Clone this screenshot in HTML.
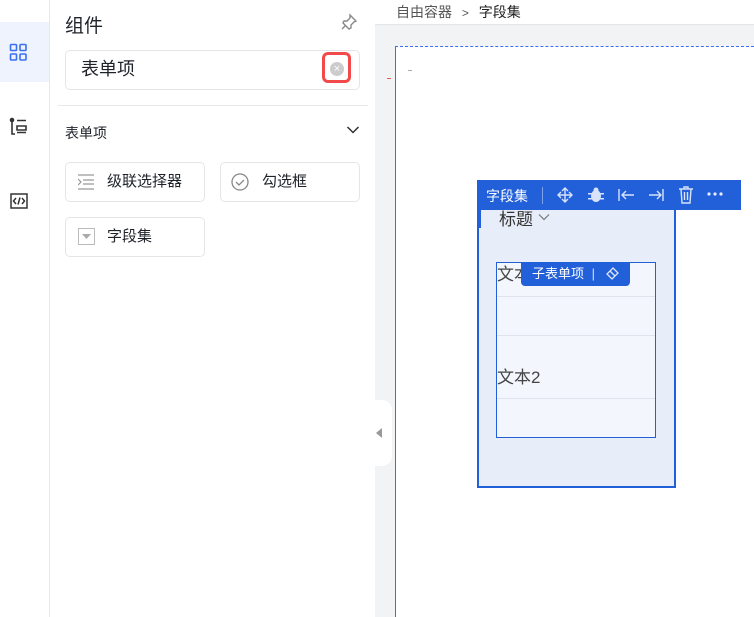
<!DOCTYPE html><html><head><meta charset="utf-8"><style>
*{margin:0;padding:0;box-sizing:border-box}
body{width:754px;height:617px;overflow:hidden;background:#f2f3f5;font-family:"Liberation Sans","Noto Sans CJK SC",sans-serif;position:relative;color:#1f2329}
.a{position:absolute}
.btn{position:absolute;height:40px;border:1px solid #e3e5e8;border-radius:5px;background:#fff;font-size:15px;line-height:38px}
</style></head><body>
<div class="a" style="left:0;top:0;width:50px;height:617px;background:#fff;border-right:1px solid #e8e8ea"></div>
<div class="a" style="left:0;top:22px;width:49px;height:60px;background:#eef3fe"></div>
<svg class="a" style="left:9px;top:43px" width="20" height="20" viewBox="0 0 20 20" fill="none" stroke="#3a6ff0" stroke-width="1.6"><rect x="1.5" y="1.5" width="6" height="6" rx="1"/><rect x="11" y="1.5" width="6" height="6" rx="1"/><rect x="1.5" y="11" width="6" height="6" rx="1"/><rect x="11" y="11" width="6" height="6" rx="1"/></svg>
<svg class="a" style="left:9px;top:117px" width="20" height="20" viewBox="0 0 20 20" fill="none" stroke="#333" stroke-width="1.6"><circle cx="3" cy="3" r="1.5" fill="#333"/><path d="M3 4v13h3M8 3.5h9M8 9h9v4H8zM8 15.5h9"/></svg>
<svg class="a" style="left:10px;top:193px" width="18" height="16" viewBox="0 0 18 16" fill="none" stroke="#333" stroke-width="1.5"><rect x="1" y="1" width="16" height="14"/><path d="M6 5l-2.5 3L6 11M12 5l2.5 3L12 11M10 4.5l-2 7"/></svg>
<div class="a" style="left:50px;top:0;width:325px;height:617px;background:#fff"></div>
<div class="a" style="left:65px;top:11px;font-size:19px">组件</div>
<svg class="a" style="left:340px;top:13px" width="18" height="18" viewBox="0 0 18 18" fill="none" stroke="#888" stroke-width="1.4"><path d="M10 2l6 6-2 1-3 3 0 3-2 1-6-6 1-2 3 0 3-3z M6 12l-4 4"/></svg>
<div class="a" style="left:65px;top:50px;width:295px;height:40px;border:1px solid #e3e5e8;border-radius:5px"></div>
<div class="a" style="left:81px;top:57px;font-size:18px;line-height:24px">表单项</div>
<div class="a" style="left:322px;top:52px;width:29px;height:31px;border:3px solid #f24a4a;border-radius:6px"></div>
<div class="a" style="left:330px;top:62px;width:14px;height:14px;border-radius:50%;background:#ccc;color:#fff;font-size:11px;line-height:14px;text-align:center">×</div>
<div class="a" style="left:58px;top:105px;width:310px;height:1px;background:#e8e8ea"></div>
<div class="a" style="left:65px;top:123px;font-size:14px">表单项</div>
<svg class="a" style="left:346px;top:125px" width="14" height="10" viewBox="0 0 14 10" fill="none" stroke="#333" stroke-width="1.5"><path d="M1.5 2l5.5 5.5L12.5 2"/></svg>
<div class="btn" style="left:65px;top:162px;width:140px;padding-left:41px">级联选择器</div>
<svg class="a" style="left:78px;top:174px" width="16" height="16" viewBox="0 0 16 16" fill="none" stroke="#999" stroke-width="1.2"><path d="M0 1h16M5 6h11M5 10h11M0 15h16M0 5l3 3-3 3"/></svg>
<div class="btn" style="left:220px;top:162px;width:140px;padding-left:41px">勾选框</div>
<svg class="a" style="left:231px;top:173px" width="18" height="18" viewBox="0 0 18 18" fill="none" stroke="#888" stroke-width="1.3"><circle cx="9" cy="9" r="8"/><path d="M5 9l3 3 5-5"/></svg>
<div class="btn" style="left:65px;top:217px;width:140px;padding-left:41px">字段集</div>
<svg class="a" style="left:78px;top:228px" width="17" height="17" viewBox="0 0 17 17"><rect x="0.5" y="0.5" width="16" height="16" fill="none" stroke="#bbb"/><path d="M4 6h9l-4.5 5z" fill="#aaa"/></svg>
<div class="a" style="left:375px;top:0;width:379px;height:25px;background:#fff;border-bottom:1px solid #e5e5e5"></div>
<div class="a" style="left:396px;top:2px;font-size:14px;color:#555">自由容器 <span style="margin:0 6px;font-size:12px">&gt;</span> <span style="color:#222">字段集</span></div>
<div class="a" style="left:395px;top:46px;width:359px;height:571px;background:#fff;border-left:1px solid #3a6ff0;border-top:1px dashed #3a6ff0"></div>
<div class="a" style="left:408px;top:70px;width:4px;height:1px;background:#aaa"></div>
<div class="a" style="left:387px;top:78px;width:4px;height:1px;background:#e55"></div>
<div class="a" style="left:375px;top:400px;width:17px;height:66px;background:#fff;border-radius:0 10px 10px 0"></div>
<div class="a" style="left:376px;top:428px;width:0;height:0;border-right:6px solid #999;border-top:5px solid transparent;border-bottom:5px solid transparent"></div>
<div class="a" style="left:477px;top:208px;width:199px;height:280px;background:#e8eef9;border:2px solid #2260d9"></div>
<div class="a" style="left:477px;top:208px;width:4px;height:20px;background:#2260d9"></div>
<div class="a" style="left:499px;top:205px;font-size:17px;color:#333">标题</div>
<svg class="a" style="left:538px;top:213px" width="12" height="8" viewBox="0 0 12 8" fill="none" stroke="#777" stroke-width="1.2"><path d="M1 1.5l5 5 5-5"/></svg>
<div class="a" style="left:496px;top:262px;width:160px;height:176px;background:#f3f6fd;border:1px solid #2260d9"></div>
<div class="a" style="left:497px;top:296px;width:158px;height:40px;border-top:1px solid #dfe3ec;border-bottom:1px solid #dfe3ec"></div>
<div class="a" style="left:497px;top:398px;width:158px;height:1px;background:#dfe3ec"></div>
<div class="a" style="left:497px;top:260px;font-size:17px;color:#444">文本</div>
<div class="a" style="left:497px;top:363px;font-size:17px;color:#444">文本2</div>
<div class="a" style="left:521px;top:263px;width:109px;height:23px;background:#2260d9;border-radius:0 0 4px 4px;color:#fff;font-size:13px;line-height:22px;padding-left:11px">子表单项 <span style="margin:0 4px;opacity:.8">|</span></div>
<svg class="a" style="left:605px;top:267px" width="14" height="14" viewBox="0 0 14 14" fill="none" stroke="#dfe7fb" stroke-width="1.3"><path d="M8 1l5 5-6 6-5-5z M5 4l5 5"/></svg>
<div class="a" style="left:477px;top:180px;width:264px;height:30px;background:#2260d9"></div>
<div class="a" style="left:486px;top:186px;font-size:14px;color:#fff">字段集</div>
<div class="a" style="left:542px;top:187px;width:1px;height:17px;background:#7fa2eb"></div>
<svg class="a" style="left:557px;top:187px" width="120" height="16" viewBox="0 0 120 16" fill="none" stroke="#d8e2fa" stroke-width="1.4">
<path d="M8 1v14M1 8h14M5 4l3-3 3 3M5 12l3 3 3-3M4 5L1 8l3 3M12 5l3 3-3 3"/>
<g transform="translate(31,0)" fill="#d8e2fa" stroke="none"><ellipse cx="8" cy="9" rx="5" ry="6"/><circle cx="8" cy="3" r="2.5"/><path d="M0 6h4v1.5H0zM12 6h4v1.5h-4zM0 11h4v1.5H0zM12 11h4v1.5h-4z"/></g>
<path d="M62 2v12M65 8h12M69 4l-4 4 4 4"/>
<path d="M92 8h12M100 4l4 4-4 4M106 2v12"/>
</svg>
<svg class="a" style="left:678px;top:186px" width="16" height="18" viewBox="0 0 16 18" fill="none" stroke="#d8e2fa" stroke-width="1.4"><path d="M1 3h14M6 3V1h4v2M3 3l1 14h8l1-14M6.5 6v8M9.5 6v8"/></svg>
<svg class="a" style="left:707px;top:192px" width="16" height="4" viewBox="0 0 16 4" fill="#e6ecfb"><circle cx="2" cy="2" r="1.6"/><circle cx="8" cy="2" r="1.6"/><circle cx="14" cy="2" r="1.6"/></svg>
</body></html>
